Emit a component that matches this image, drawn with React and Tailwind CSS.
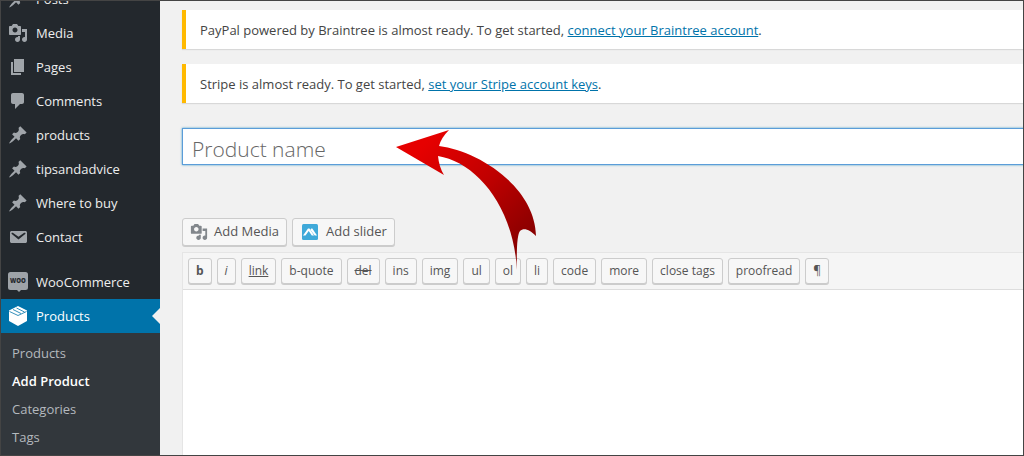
import { clsx } from "clsx";

const ICONS = {
  pin: "M10.44 3.02l1.82-1.82 6.36 6.35-1.83 1.82c-1.05-.68-2.48-.57-3.41.36l-.75.75c-.92.93-1.04 2.35-.35 3.41l-1.83 1.82-2.41-2.41-2.8 2.79c-.42.42-3.38 2.71-3.8 2.29s1.86-3.39 2.28-3.81l2.79-2.79L4.1 9.36l1.83-1.82c1.05.69 2.48.57 3.4-.36l.75-.75c.93-.92 1.05-2.35.36-3.41z",
  media: "M13 11V4c0-.55-.45-1-1-1h-1.67L9 1H5L3.67 3H2c-.55 0-1 .45-1 1v7c0 .55.45 1 1 1h10c.55 0 1-.45 1-1zM7 4.5c1.38 0 2.5 1.12 2.5 2.5S8.38 9.5 7 9.5 4.5 8.38 4.5 7 5.62 4.5 7 4.5zM14 6h5v10.5c0 1.38-1.12 2.5-2.5 2.5S14 17.88 14 16.5s1.12-2.5 2.5-2.5c.17 0 .34.02.5.05V9h-3V6zm-4 8.05V13h2v3.5c0 1.38-1.12 2.5-2.5 2.5S7 17.88 7 16.5 8.12 14 9.5 14c.17 0 .34.02.5.05z",
  page: "M6 15V2h10v13H6zm-1 1h8v2H3V5h2v11z",
  comment: "M5 2h9c1.1 0 2 .9 2 2v7c0 1.1-.9 2-2 2h-2l-5 5v-5H5c-1.1 0-2-.9-2-2V4c0-1.1.9-2 2-2z",
  email: "M3.87 4h13.25C18.37 4 19 4.59 19 5.79v8.42c0 1.19-.63 1.79-1.88 1.79H3.87c-1.25 0-1.88-.6-1.88-1.79V5.79c0-1.2.63-1.79 1.88-1.79zm6.62 8.6l6.74-5.53c.24-.2.43-.66.13-1.07-.29-.41-.82-.42-1.17-.17l-5.7 3.86L4.8 5.83c-.35-.25-.88-.24-1.17.17-.3.41-.11.87.13 1.07z",
};

const MENU = [
  { label: "Posts", icon: "pin" },
  { label: "Media", icon: "media" },
  { label: "Pages", icon: "page" },
  { label: "Comments", icon: "comment" },
  { label: "products", icon: "pin" },
  { label: "tipsandadvice", icon: "pin" },
  { label: "Where to buy", icon: "pin" },
  { label: "Contact", icon: "email" },
];

const SUBMENU = ["Products", "Add Product", "Categories", "Tags"];

const QUICKTAGS = [
  { label: "b", style: "font-bold" },
  { label: "i", style: "italic" },
  { label: "link", style: "underline" },
  { label: "b-quote" },
  { label: "del", style: "line-through" },
  { label: "ins" },
  { label: "img" },
  { label: "ul" },
  { label: "ol" },
  { label: "li" },
  { label: "code" },
  { label: "more" },
  { label: "close tags" },
  { label: "proofread" },
  { label: "¶" },
];

function Icon({ name, className }) {
  return (
    <svg viewBox="0 0 20 20" className={clsx("shrink-0 fill-current", className)} aria-hidden="true">
      <path d={ICONS[name]} />
    </svg>
  );
}

function WooIcon() {
  return (
    <svg viewBox="0 0 20 20" className="size-5 shrink-0" aria-hidden="true">
      <path d="M2.5 0h15A2.5 2.5 0 0 1 20 2.5v13a2.5 2.5 0 0 1-2.5 2.5H13l-2 2-2-2H2.5A2.5 2.5 0 0 1 0 15.5v-13A2.5 2.5 0 0 1 2.5 0z" fill="#9ea3a8" />
      <text x="10" y="11" textAnchor="middle" fontSize="6" fontWeight="800" fill="#23282d">WOO</text>
    </svg>
  );
}

function BoxIcon() {
  return (
    <svg viewBox="0 0 20 20" className="size-5 shrink-0" aria-hidden="true">
      <path d="M10 0l9 4.5v10.5l-9 5-9-5V4.5z" fill="#fff" />
      <path d="M1.5 5.5L10 9.5l8.500-4M5 3.500l8 4M8.500 2l8 4" fill="none" stroke="#0073aa" strokeWidth="0.8" />
    </svg>
  );
}

function SliderIcon() {
  return (
    <svg viewBox="0 0 16 16" className="size-4 shrink-0" aria-hidden="true">
      <rect width="16" height="16" rx="1.5" fill="#3fa9d9" />
      <path d="M1 11.5L6 4.5h1.500L12 11.500H9.800L6.700 7 3.500 11.500z" fill="#fff" />
      <path d="M8.300 5.800L9.300 4.500h1L15 11.500h-2.300z" fill="#fff" />
    </svg>
  );
}

function MenuItem({ label, children, active }) {
  return (
    <li>
      <a
        href="#"
        aria-current={active ? "true" : undefined}
        className={clsx(
          "relative flex h-[34px] items-center gap-2 pl-[7px] text-[13px]",
          active ? "bg-[#0073aa] text-white" : "text-[#eee]"
        )}
      >
        {children}
        <span className="pt-0.5">{label}</span>
        {active && (
          <span className="absolute top-1/2 right-0 -translate-y-1/2 border-8 border-transparent border-r-[#f1f1f1]" />
        )}
      </a>
    </li>
  );
}

function Sidebar() {
  return (
    <nav className="w-[159px] shrink-0 overflow-hidden bg-[#23282d]">
      {/* the list is scrolled past the first item */}
      <ul className="-mt-[19px]">
        {MENU.map((item) => (
          <MenuItem key={item.label} label={item.label}>
            <Icon name={item.icon} className="size-5 text-[#a0a5aa]" />
          </MenuItem>
        ))}
        <li className="h-[11px]" role="separator" />
        <MenuItem label="WooCommerce">
          <WooIcon />
        </MenuItem>
        <MenuItem label="Products" active>
          <BoxIcon />
        </MenuItem>
      </ul>
      <ul className="h-full bg-[#32373c] pt-1.5 text-[13px]">
        {SUBMENU.map((label) => (
          <li key={label}>
            <a
              href="#"
              className={clsx(
                "block pl-[11px] leading-7",
                label === "Add Product" ? "font-semibold text-white" : "text-[#b4b9be]"
              )}
            >
              {label}
            </a>
          </li>
        ))}
      </ul>
    </nav>
  );
}

function Notice({ text, link }) {
  return (
    <div className="border-l-4 border-[#ffb900] bg-white pt-2.5 pb-2 pl-3.5 text-[13px] leading-[21px] shadow-[0_1px_1px_rgba(0,0,0,0.1)]">
      {text}{" "}
      <a href="#" className="text-[#0073aa] underline">{link}</a>.
    </div>
  );
}

function MediaButton({ children, className }) {
  return (
    <button
      type="button"
      className={clsx(
        "flex h-7 items-center rounded-[3px] border border-[#ccc] bg-[#f7f7f7] pr-[7px] text-[13px] text-[#555] shadow-[0_1px_0_#ccc]",
        className
      )}
    >
      {children}
    </button>
  );
}

function Editor() {
  return (
    <div className="mt-[5px] flex flex-1 flex-col border-t border-l border-[#e5e5e5] bg-white">
      <div className="flex gap-[5px] border-b border-[#ddd] bg-[#f5f5f5] p-[5px]">
        {QUICKTAGS.map(({ label, style }) => (
          <button
            key={label}
            type="button"
            className={clsx(
              "h-[26px] rounded-[3px] border border-[#ccc] bg-[#f7f7f7] px-[7px] text-xs text-[#555] shadow-[0_1px_0_#ccc]",
              style
            )}
          >
            {label}
          </button>
        ))}
      </div>
      <textarea aria-label="Product description" className="w-full flex-1 resize-none p-2.5 outline-none" />
    </div>
  );
}

function Arrow() {
  return (
    <svg
      viewBox="0 0 142 142"
      className="pointer-events-none absolute top-[128px] left-[394px] w-[142px]"
      aria-hidden="true"
    >
      <defs>
        <linearGradient id="arrow" x1="0" y1="0" x2="1" y2="1">
          <stop offset="0.15" stopColor="#e60000" />
          <stop offset="0.5" stopColor="#c00000" />
          <stop offset="0.85" stopColor="#8a0000" />
        </linearGradient>
      </defs>
      <path
        d="M1 18L54 1Q46 9 44 17C84 22 140 58 141 107C135 101 129 98 125 102Q121 107 122 141C118 75 80 33 43 27Q44 38 49 46Z"
        fill="url(#arrow)"
      />
    </svg>
  );
}

export default function App() {
  return (
    <div className="relative flex h-screen overflow-hidden border border-[#444] bg-[#f1f1f1] font-['Open_Sans','Noto_Sans',sans-serif] text-[#444]">
      <Sidebar />
      <main className="flex min-w-0 flex-1 flex-col pt-[9px] pl-[22px]">
        <div className="flex flex-col gap-[15px]">
          <Notice text="PayPal powered by Braintree is almost ready. To get started," link="connect your Braintree account" />
          <Notice text="Stripe is almost ready. To get started," link="set your Stripe account keys" />
        </div>
        <input
          type="text"
          aria-label="Product name"
          placeholder="Product name"
          className="mt-[25px] -mr-0.5 h-[37px] shrink-0 border border-[#5b9dd9] bg-white px-[9px] pt-1 text-[21px] font-light shadow-[0_0_2px_rgba(30,140,190,0.8)] outline-none placeholder:text-[#666]"
        />
        <div className="mt-[53px] flex gap-[5px] pb-px">
          <MediaButton className="gap-1.5 pl-[7px]">
            <Icon name="media" className="size-[18px] text-[#82878c]" />
            Add Media
          </MediaButton>
          <MediaButton className="gap-2 pl-[9px]">
            <SliderIcon />
            Add slider
          </MediaButton>
        </div>
        <Editor />
      </main>
      <Arrow />
    </div>
  );
}
